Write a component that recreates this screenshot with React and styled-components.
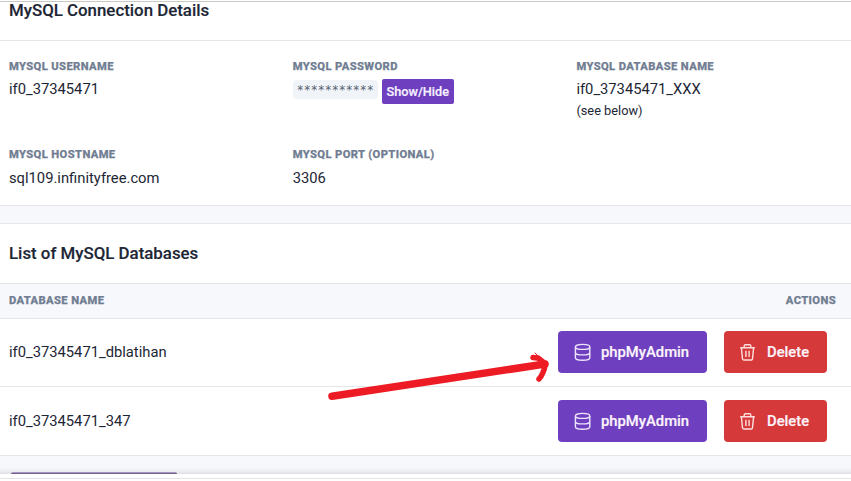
import React from "react";
import styled, { createGlobalStyle } from "styled-components";

const Global = createGlobalStyle`
  * { box-sizing: border-box; }
  body { margin: 0; background: #fff; color: #1d2635; font-family: Roboto, "Liberation Sans", sans-serif; font-size: 14.75px; overflow: hidden; }
`;

const Page = styled.main`
  position: relative;
  display: flex;
  flex-direction: column;
  width: 851px;
  height: 481px;
  overflow: hidden;
  background: #fff;
`;

const WindowEdge = styled.div`
  height: 2px;
  border-bottom: 1px solid #c9c9c6;
`;

const CardHeader = styled.header`
  height: ${(p) => p.$height}px;
  padding: ${(p) => p.$top}px 9px 0;
  border-bottom: 1px solid #e4e6ea;
`;

const Title = styled.h3`
  margin: 0;
  font-size: 16.85px;
  line-height: ${(p) => p.$line || 20}px;
  font-weight: 500;
  -webkit-text-stroke: 0.15px currentColor;
`;

const Details = styled.section`
  display: grid;
  grid-template-columns: 283.7px 283.7px 1fr;
  grid-template-rows: 88px 1fr;
  height: 165px;
  padding: 19px 0 0 9px;
  border-bottom: 1px solid #e4e6ea;
`;

const Label = styled.div`
  font-size: 11.2px;
  line-height: 14px;
  font-weight: 800;
  letter-spacing: 0.38px;
  text-transform: uppercase;
  color: #717d92;
  -webkit-text-stroke: 0.25px currentColor;
`;

const Value = styled.div`
  display: flex;
  height: 25px;
  margin-top: ${(p) => p.$top ?? 4}px;
  line-height: 22px;
`;

const Note = styled.div`
  font-size: 12.8px;
  line-height: 18px;
  margin-top: -1px;
`;

const Secret = styled.code`
  height: 19px;
  margin: 2px 4px 0 0;
  padding: 0 4px;
  border-radius: 4px;
  background: #f0f4f8;
  color: #566172;
  font-family: "DejaVu Sans Mono", monospace;
  font-size: 11.65px;
  line-height: 21px;
`;

const ToggleButton = styled.button`
  width: 72px;
  height: 25px;
  margin-top: 1px;
  padding: 0;
  border: 0;
  border-radius: 2px;
  background: #6e40bf;
  color: #f7f1ff;
  font: 500 12.7px/25px Roboto, sans-serif;
  white-space: nowrap;
  -webkit-text-stroke: 0.2px currentColor;
`;

const Gap = styled.div`
  height: 18px;
  background: #f6f8fc;
  border-bottom: 1px solid #e4e6ea;
`;

const TableHead = styled.div`
  display: flex;
  justify-content: space-between;
  align-items: center;
  height: 35px;
  padding: 0 15px 0 9px;
  background: #f6f8fc;
  border-bottom: 1px solid #e4e6ea;
`;

const Row = styled.div`
  display: flex;
  justify-content: space-between;
  height: ${(p) => p.$height}px;
  padding: ${(p) => p.$top}px 24px 0 9px;
  line-height: 42px;
  border-bottom: 1px solid #e4e6ea;
`;

const Actions = styled.div`
  display: flex;
  gap: 17px;
`;

const ActionButton = styled.button`
  display: flex;
  align-items: center;
  gap: 8px;
  width: ${(p) => (p.$danger ? 103 : 149)}px;
  height: 42px;
  padding: 0 0 0 14px;
  border: 0;
  border-radius: 4px;
  background: ${(p) => (p.$danger ? "#d63939" : "#6e40bf")};
  color: #fbf3fb;
  font: 500 14.8px/42px Roboto, sans-serif;
  -webkit-text-stroke: 0.2px currentColor;
  svg { flex: none; }
`;

const Footer = styled.footer`
  height: 18px;
  padding: 16px 0 0 11px;
  background: linear-gradient(#f6f8fc 0 11px, #eceef2 15px, #dfe1e5 18px);
`;

const ButtonEdge = styled.div`
  width: 166px;
  height: 2px;
  border-radius: 2px 2px 0 0;
  background: linear-gradient(#bbb1cc, #5f477f);
`;

const Baseline = styled.div`
  height: 5px;
  border-bottom: 1px solid #e4e4e4;
`;

const Arrow = styled.svg`
  position: absolute;
  left: 320px;
  top: 345px;
`;

const DatabaseIcon = () => (
  <svg width="21" height="21" viewBox="0 0.5 21 21" fill="none" stroke="#eee3fc" strokeWidth="1.4">
    <ellipse cx="10.6" cy="5.4" rx="7.2" ry="2.5" />
    <path d="M3.4 5.4v10.9c0 1.4 3.2 2.5 7.2 2.5s7.2-1.1 7.2-2.5V5.4M3.4 10.9c0 1.4 3.2 2.5 7.2 2.5s7.2-1.1 7.2-2.5" />
  </svg>
);

const TrashIcon = () => (
  <svg width="21" height="21" viewBox="0 0.5 21 21" fill="none" stroke="#fde0df" strokeWidth="1.4" strokeLinejoin="round">
    <path d="M2.2 6.2h14.6M6.2 6V4.4q0-1.2 1.2-1.2h4.2q1.2 0 1.2 1.2V6M3.4 6.4l1.1 10.9q.1 1.2 1.2 1.2h7.6q1.1 0 1.2-1.2l1.1-10.9M7.9 9.2v6.4M11.1 9.2v6.4" />
  </svg>
);

const DatabaseRow = ({ name, height, top }) => (
  <Row $height={height} $top={top}>
    <span>{name}</span>
    <Actions>
      <ActionButton><DatabaseIcon />phpMyAdmin</ActionButton>
      <ActionButton $danger><TrashIcon />Delete</ActionButton>
    </Actions>
  </Row>
);

const Detail = ({ label, children }) => (
  <div>
    <Label>{label}</Label>
    {children}
  </div>
);

export default function App() {
  return (
    <Page>
      <Global />
      <WindowEdge />
      <CardHeader $height={39} $top={0}><Title $line={16}>MySQL Connection Details</Title></CardHeader>
      <Details>
        <Detail label="MySQL Username"><Value>if0_37345471</Value></Detail>
        <Detail label="MySQL Password">
          <Value><Secret>***********</Secret><ToggleButton>Show/Hide</ToggleButton></Value>
        </Detail>
        <Detail label="MySQL Database Name">
          <Value>if0_37345471_XXX</Value>
          <Note>(see below)</Note>
        </Detail>
        <Detail label="MySQL Hostname"><Value $top={5}>sql109.infinityfree.com</Value></Detail>
        <Detail label="MySQL Port (optional)"><Value $top={5}>3306</Value></Detail>
      </Details>
      <Gap />
      <CardHeader $height={60} $top={19}><Title>List of MySQL Databases</Title></CardHeader>
      <TableHead><Label>Database Name</Label><Label>Actions</Label></TableHead>
      <DatabaseRow name="if0_37345471_dblatihan" height={68} top={12} />
      <DatabaseRow name="if0_37345471_347" height={69} top={13} />
      <Footer><ButtonEdge /></Footer>
      <Baseline />
      <Arrow width="235" height="60" viewBox="320 345 235 60" fill="none" stroke="#ed1c24" strokeLinecap="round" strokeLinejoin="round">
        <path d="M332 396.3L545 364" strokeWidth="7.5" />
        <path d="M533 357.5L538 358L545.5 364Q543.5 374 539 379" strokeWidth="5.5" />
        <path d="M535 353l3 3" strokeWidth="1" />
      </Arrow>
    </Page>
  );
}
